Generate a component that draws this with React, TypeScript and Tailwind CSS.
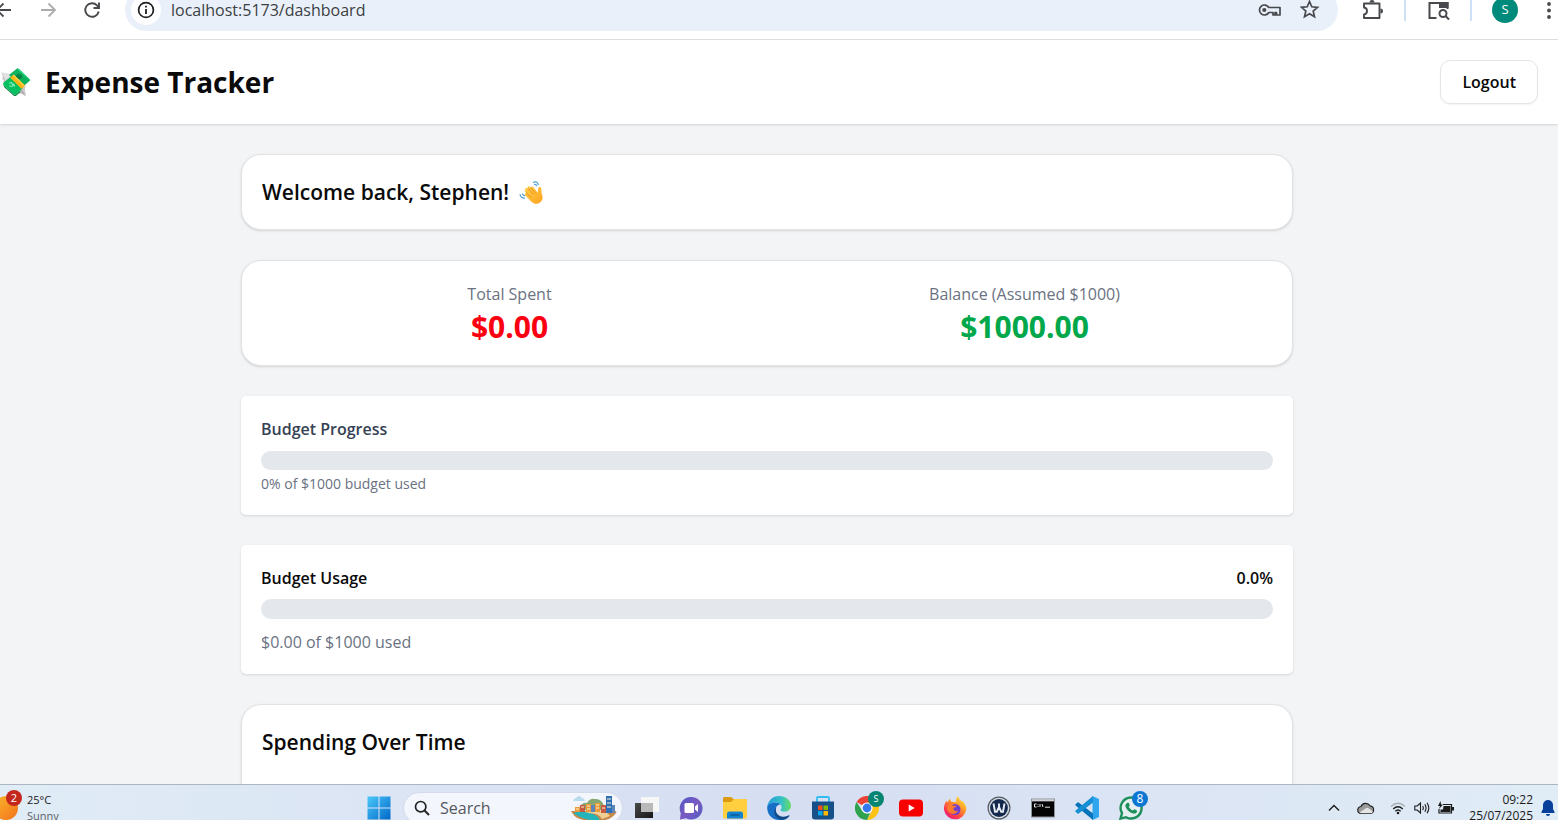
import type { ReactNode } from "react";

const FONT = "font-['Open_Sans','Noto_Sans',sans-serif]";

/* ---------- Illustrations ---------- */

function MoneyWings() {
  return (
    <svg viewBox="0 0 30 30" className="size-[30px] shrink-0" aria-hidden="true">
      <path d="M1.500 5.500l12.500 2.500-6 9-5-2 1-2-2-1 1-2z" fill="#c4c2c6" />
      <path d="M1.500 5.500l11 3-7 4.500z" fill="#e2e1e3" />
      <path d="M17 20l8.500-3-.5 6 1 6.500-4-2.500-6-1z" fill="#cfcacd" />
      <path d="M21 21l4.500 7.500-4-2.500z" fill="#b0aaaf" />
      <path d="M9 8L17 1.500Q18 1 19 2l10.500 10q1 1 0 2l-7.500 6.500z" fill="#0fb25c" />
      <path d="M19 2l10.500 10q.5.500.3 1.200L17.500 2.500z" fill="#35d98c" />
      <ellipse cx="19" cy="9.500" rx="3.200" ry="2.600" fill="#078546" />
      <path d="M11 9.500l12 11.500-6.500 6q-1.500 1-3 0L3.500 18q-1-1.200 0-2.200z" fill="#07c160" />
      <path d="M3.500 18l10 9q1.500 1 3 0l4-3.500v1.500l-4 3.500q-1.500 1-3 0L4 20z" fill="#078a46" />
      <path d="M13.500 7.500l11.500 11-3.200 3.500L10.200 10.800z" fill="#fcb515" />
      <path d="M13.500 7.500l11.500 11-1 1L12.500 8.400z" fill="#ffd147" />
      <path d="M9.500 16.500q2-2 2.500 0t2 .5M9.500 18.500q2 2 3.500 0t1.500 1" stroke="#8cf0bb" fill="none" strokeWidth="1.100" />
    </svg>
  );
}

function WavingHand() {
  return (
    <svg viewBox="0 0 24 24" className="size-6 shrink-0" aria-hidden="true">
      <defs>
        <linearGradient id="hand" x1="0" y1="0" x2="1" y2="1">
          <stop offset="0" stopColor="#ffcf4a" />
          <stop offset="1" stopColor="#fda21f" />
        </linearGradient>
      </defs>
      <path d="M14 2.500q4-2.200 5.500 2.500M15 4.500q2-.8 2.800 1.600" stroke="#4d9fd0" strokeWidth="1.200" fill="none" />
      <path d="M1 14q.5 4.500 5 4M3.500 13.500q.3 2.300 2.500 2.200" stroke="#4d9fd0" strokeWidth="1.200" fill="none" />
      <path
        d="M6.800 8.200c.8-.8 1.700-.5 2.400.2l-.7-1.300c.6-1.300 2-1.200 2.700-.2l.6.800c.3-1.500 1.900-1.700 2.700-.5l4.100 5.600.5-4.300c.2-2 2.900-2.200 3.100-.2.300 2.700.2 5 1.200 7.600 1 3-1 6.500-4.200 7.500-2.500.8-5 .1-6.800-1.700L6.300 15.600c-.9-1-.3-2.300.8-2.500l-.9-1.200c-.8-1-.3-2.500.6-3.700z"
        fill="url(#hand)"
      />
      <path d="M9.200 8.400l5 5.800M7.500 13l4.300 4M11.800 7.600l5 5.800" stroke="#e98a17" strokeWidth=".8" fill="none" strokeLinecap="round" />
    </svg>
  );
}

/* ---------- Browser toolbar ---------- */

function BrowserBar() {
  return (
    <div className="-mt-3 flex h-[52px] shrink-0 items-center border-b border-[#dfe1e3] bg-white pb-2 text-[#47494c]">
      <button aria-label="Back" className="-ml-2 flex w-6 justify-center">
        <svg viewBox="0 0 20 20" className="size-5" fill="none" stroke="currentColor" strokeWidth="1.800">
          <path d="M17 10H3M9.500 3.500L3 10l6.500 6.500" />
        </svg>
      </button>
      <button aria-label="Forward" className="ml-5 flex w-6 justify-center text-[#acacac]">
        <svg viewBox="0 0 20 20" className="size-5" fill="none" stroke="currentColor" strokeWidth="1.800">
          <path d="M3 10h14M10.500 3.500L17 10l-6.500 6.500" />
        </svg>
      </button>
      <button aria-label="Reload" className="ml-5 flex w-6 justify-center">
        <svg viewBox="0 0 20 20" className="size-5" fill="none" stroke="currentColor" strokeWidth="1.900">
          <path d="M16.700 11.500A6.800 6.800 0 1 1 15 5.300l1.500 1.700" />
          <path d="M17 2.500V8h-5.500" />
        </svg>
      </button>
      <div className="ml-[21px] flex h-[42px] flex-1 items-center rounded-full bg-[#e9f0fa] pr-[18px] pl-[6px]">
        <button aria-label="Site information" className="flex size-[30px] items-center justify-center rounded-full bg-white text-[#1f1f1f]">
          <svg viewBox="0 0 18 18" className="size-[18px]" fill="none" stroke="currentColor" strokeWidth="1.700">
            <circle cx="9" cy="9" r="7.400" />
            <path d="M9 8v5M9 4.800v1.800" strokeWidth="1.800" />
          </svg>
        </button>
        <input
          aria-label="Address"
          readOnly
          defaultValue="localhost:5173/dashboard"
          className="ml-[10px] block min-w-0 flex-1 bg-transparent text-[16px] leading-6 text-[#3c4043] outline-none"
        />
        <button aria-label="Passwords" className="flex w-6 justify-center">
          <svg viewBox="0 0 24 16" className="h-4 w-6" fill="none" stroke="currentColor" strokeWidth="1.700">
            <path d="M10.800 5.500A5 5 0 1 0 10.800 10.500H15V13h2v-2.500h1.500V13H22V5.500z" strokeLinejoin="round" />
            <circle cx="6.300" cy="8" r="2.100" fill="currentColor" stroke="none" />
          </svg>
        </button>
        <button aria-label="Bookmark this page" className="ml-[18px] flex w-5 justify-center">
          <svg viewBox="0 0 20 20" className="size-5" fill="none" stroke="currentColor" strokeWidth="1.700">
            <path d="M9.500 1.500l2.300 5.300 5.700.5-4.300 3.800 1.300 5.600-5-3-5 3 1.300-5.600L1.500 7.300l5.700-.5z" />
          </svg>
        </button>
      </div>
      <button aria-label="Extensions" className="ml-6 flex w-[22px] justify-center">
        <svg viewBox="0 0 22 22" className="size-[22px]" fill="none" stroke="currentColor" strokeWidth="1.900" strokeLinejoin="round">
          <path d="M2 4.500H17.500V19H2V15.500C6 15 6 9 2 8.500z" />
          <path d="M7.500 3.500a2.500 2.500 0 0 1 5 0zM18.500 9.500a2.500 2.500 0 0 1 0 5z" fill="currentColor" stroke="none" />
        </svg>
      </button>
      <span className="ml-5 h-[22px] w-[2px] bg-[#cfe1f8]" />
      <button aria-label="Search tabs" className="ml-[22px] flex w-[22px] justify-center">
        <svg viewBox="0 0 22 22" className="size-[22px]" fill="none" stroke="currentColor" strokeWidth="2">
          <path d="M8.500 19H1.500V4h18v6" />
          <path d="M11 3h9.500v6H11z" fill="currentColor" stroke="none" />
          <circle cx="15" cy="14.500" r="3.500" />
          <path d="M17.500 17l3.500 3.500" />
        </svg>
      </button>
      <span className="ml-5 h-[22px] w-[2px] bg-[#cfe1f8]" />
      <button aria-label="Profile" className="ml-5 flex size-[26px] items-center justify-center rounded-full bg-[#008a7b] text-[13px] text-white">
        S
      </button>
      <button aria-label="Menu" className="ml-5 flex w-5 justify-center">
        <svg viewBox="0 0 20 20" className="size-5" fill="currentColor">
          <circle cx="11" cy="4" r="1.900" />
          <circle cx="11" cy="10.500" r="1.900" />
          <circle cx="11" cy="17" r="1.900" />
        </svg>
      </button>
    </div>
  );
}

/* ---------- Dashboard ---------- */

function Card({ children }: { children: ReactNode }) {
  return (
    <section className="rounded-[20px] border border-[#e1e2e4] bg-white p-5 shadow-sm">{children}</section>
  );
}

function Panel({ children }: { children: ReactNode }) {
  return <section className="rounded-[5px] bg-white p-5 shadow-sm">{children}</section>;
}

function Stat({ label, value, tone }: { label: string; value: string; tone: string }) {
  return (
    <div className="text-center">
      <p className="text-[16px] leading-[27px] text-[#6a7282]">{label}</p>
      <p className={`text-[30px] leading-[37px] font-bold ${tone}`}>{value}</p>
    </div>
  );
}

function Dashboard() {
  return (
    <div className="flex min-h-0 flex-1 flex-col bg-[#f3f4f6]">
      <header className="z-10 flex shrink-0 items-center justify-between bg-white py-5 pr-5 shadow">
        <h1 className="flex items-center gap-[15px] text-[28px] leading-9 font-bold text-[#0a0a0a]">
          <MoneyWings />
          Expense Tracker
        </h1>
        <button className="h-11 rounded-[10px] border border-[#e5e5e5] bg-white px-[21px] text-[16px] leading-6 font-semibold text-[#0a0a0a] shadow-xs">
          Logout
        </button>
      </header>
      <main className="min-h-0 flex-1 overflow-hidden pt-[30px] pr-6">
        <div className="mx-auto flex max-w-[1052px] flex-col gap-[30px]">
          <Card>
            <h2 className="flex items-center gap-[10px] text-[21px] leading-[34px] font-semibold text-[#0a0a0a]">
              Welcome back, Stephen! <WavingHand />
            </h2>
          </Card>
          <Card>
            <div className="grid grid-cols-2 gap-5">
              <Stat label="Total Spent" value="$0.00" tone="text-[#fb0010]" />
              <Stat label="Balance (Assumed $1000)" value="$1000.00" tone="text-[#00a84b]" />
            </div>
          </Card>
          <Panel>
            <h3 className="mb-[9px] text-[16px] leading-[26px] font-semibold text-[#364153]">Budget Progress</h3>
            <div role="progressbar" aria-label="Budget progress" aria-valuenow={0} className="h-[19px] rounded-full bg-[#e4e7eb]" />
            <p className="pt-[3px] text-[14px] leading-[22px] text-[#6a7282]">0% of $1000 budget used</p>
          </Panel>
          <Panel>
            <div className="mb-2 flex justify-between text-[16px] leading-[26px] font-semibold text-[#0a0a0a]">
              <h3>Budget Usage</h3>
              <span>0.0%</span>
            </div>
            <div role="progressbar" aria-label="Budget usage" aria-valuenow={0} className="mb-[11px] h-5 rounded-full bg-[#e4e7eb]" />
            <p className="text-[16px] leading-6 text-[#6a7282]">$0.00 of $1000 used</p>
          </Panel>
          <Card>
            <h2 className="mb-40 text-[21px] leading-[34px] font-semibold text-[#0a0a0a]">Spending Over Time</h2>
          </Card>
        </div>
      </main>
    </div>
  );
}

/* ---------- Taskbar ---------- */

function TaskButton({ name, badge, children }: { name: string; badge?: ReactNode; children: ReactNode }) {
  return (
    <button aria-label={name} className="relative flex h-12 w-11 items-center justify-center">
      <svg viewBox="0 0 24 24" className="size-6">{children}</svg>
      {badge}
    </button>
  );
}

function SearchArt() {
  return (
    <svg viewBox="0 0 48 28" className="h-7 w-12 shrink-0" aria-hidden="true">
      <path d="M4 7q1-3 3-3 3-4 6 0 2 0 3 3z" fill="#b8dcec" />
      <path d="M9 16q4-9 9-7 3-5 8-4 8-1 10 11z" fill="#85a872" />
      <path d="M2 17h44q2 0 1 2-5 8-20 8Q8 27 4 20z" fill="#c7884a" />
      <path d="M4 19q12-3 20 1t6 6q-8 1-14-1T4 19z" fill="#24b3b8" />
      <path d="M16 19q14-1 17 6l8-3q-4-6-13-6z" fill="#f0cf95" />
      <path d="M6 13h5v5H6zM17 10h5v8h-5zM26 9h5v9h-5z" fill="#e99a3a" />
      <path d="M11 11h5v7h-5zM32 11h5v8h-5z" fill="#c65a43" />
      <path d="M37 2h6v17h-6z" fill="#2f6fb5" />
      <path d="M22 11h4v7h-4zM43 11h3v8h-3z" fill="#5b86b7" />
      <path d="M7 15h3M12 13h3M18 12h3M18 15h3M27 11h3M27 14h3M33 14h3M38 5h4M38 9h4M38 13h4" stroke="#fff1cc" strokeWidth="1" />
    </svg>
  );
}

function Taskbar() {
  return (
    <footer className="z-20 -mb-[10px] flex h-[46px] shrink-0 items-center overflow-hidden border-t border-[#adb4c2] bg-linear-to-r from-[#e0ecf6] via-[#d6def2] to-[#e0ecf6] text-[#1b1b1b]">
      <button className="relative flex flex-1 basis-0 items-center text-left">
        <span className="-ml-[6px] size-6 shrink-0 rounded-full bg-linear-to-br from-[#f8b62d] to-[#f3701b]" />
        <span className="absolute top-[-2px] left-[6px] flex size-4 items-center justify-center rounded-full bg-[#c4281d] text-[11px] leading-none text-white">
          2
        </span>
        <span className="ml-[9px] flex flex-col text-[11px] leading-4">
          <span>25°C</span>
          <span className="text-[#5b6168]">Sunny</span>
        </span>
      </button>

      <nav aria-label="Taskbar" className="flex items-center pr-12">
        <TaskButton name="Start">
          <defs>
            <linearGradient id="win" x1="0" y1="0" x2="1" y2="1">
              <stop offset="0" stopColor="#4cc9fb" />
              <stop offset="1" stopColor="#0067c8" />
            </linearGradient>
          </defs>
          <path d="M.5.500h11v11H.5zM12.500.500h11v11h-11zM.5 12.500h11v11H.5zM12.500 12.500h11v11h-11z" fill="url(#win)" />
        </TaskButton>
        <div className="mr-0.5 ml-[2px] flex h-8 w-[220px] items-center rounded-full border border-[#d3daea] bg-[#f3f6fc] pr-[5px] pl-[10px]">
          <svg viewBox="0 0 16 16" className="size-4 shrink-0" fill="none" stroke="#222" strokeWidth="1.700">
            <circle cx="6.700" cy="6.700" r="5.200" />
            <path d="M10.500 10.500l4.500 4.500" strokeWidth="2" />
          </svg>
          <input
            aria-label="Search"
            placeholder="Search"
            className="ml-[10px] w-full min-w-0 bg-transparent text-[16px] leading-5 outline-none placeholder:text-[#55585e]"
          />
          <SearchArt />
        </div>
        <TaskButton name="Task view">
          <defs>
            <linearGradient id="tv" x1="0" y1="0" x2="1" y2="1">
              <stop offset="0" stopColor="#494949" />
              <stop offset="1" stopColor="#181818" />
            </linearGradient>
          </defs>
          <path d="M0 7h18v15H0z" fill="url(#tv)" />
          <path d="M6 1h18v15H6z" fill="#f6f6f6" />
          <path d="M6 7h12v9H6z" fill="#b9b9b9" />
        </TaskButton>
        <TaskButton name="Chat">
          <defs>
            <linearGradient id="chat" x1="0" y1="0" x2="1" y2="1">
              <stop offset="0" stopColor="#5059c9" />
              <stop offset=".5" stopColor="#7a59c0" />
              <stop offset="1" stopColor="#5360c8" />
            </linearGradient>
          </defs>
          <path d="M12 1a11.300 11.300 0 1 1-5 21.300L1 23.500l.7-6.500A11.300 11.300 0 0 1 12 1z" fill="url(#chat)" />
          <rect x="5.500" y="7" width="9.500" height="10" rx="1.500" fill="#fff" />
          <path d="M16 10.500l3-2.500v8l-3-2.500z" fill="#fff" />
        </TaskButton>
        <TaskButton name="File Explorer">
          <path d="M0 2.500Q0 1 1.500 1H8l2.500 2H22.500Q24 3 24 4.500V10H0z" fill="#dc9a12" />
          <path d="M0 6h8l3-3h11.500Q24 3 24 4.500V21q0 1.500-1.500 1.500h-21Q0 22.500 0 21z" fill="#ffcf3f" />
          <path d="M4 22.500V18q0-2.500 2.500-2.500h11Q20 15.500 20 18v4.500z" fill="#1382cf" />
          <path d="M8 19h8" stroke="#0c5c9c" strokeWidth="1.500" strokeLinecap="round" />
        </TaskButton>
        <TaskButton name="Edge">
          <defs>
            <linearGradient id="edge" x1="0" y1="0" x2="1" y2="0">
              <stop offset="0" stopColor="#239bdc" />
              <stop offset=".6" stopColor="#35c1c5" />
              <stop offset="1" stopColor="#68dc63" />
            </linearGradient>
          </defs>
          <path d="M.2 11C1 4.500 6 0 12 0c7 0 12 4.700 12 9.600 0 4-3 6-6.400 6-2.600 0-4.200-.8-4-1.700.1-.5 1-1 1-2.800 0-2.700-2.700-4.700-6-4.700C4.500 6.400 1.200 8.500.2 11z" fill="url(#edge)" />
          <path d="M.2 11c1-3 4.300-4.600 8.200-4.600 2.300 0 4.200.8 5.200 2-3 0-5.300 2.500-5.300 5.500 0 5 4.200 8.600 8.700 8.600-1.500 1-3.200 1.500-5 1.500C5 24 0 18.500.2 11z" fill="#176fc5" />
          <path d="M9.300 11c-2 5.500 2.500 10 7.200 9.800 2.300 0 4-.8 5.200-1.500.6-.3 1 .2.700.7-1.500 2.200-4 3.700-6.400 3.900-6-.2-9.500-5-8.600-9.500.3-1.500 1-2.600 1.900-3.400z" fill="#114a8b" />
        </TaskButton>
        <TaskButton name="Microsoft Store">
          <path d="M6 6V2q0-1 1-1h10q1 0 1 1v4" fill="none" stroke="#31bdf2" strokeWidth="1.800" />
          <path d="M1 5.500h22v15q0 3-3 3H4q-3 0-3-3z" fill="#174f88" />
          <path d="M7 9.500h4.500V14H7z" fill="#f25022" />
          <path d="M12.500 9.500H17V14h-4.500z" fill="#7fba00" />
          <path d="M7 15h4.500v4.500H7z" fill="#00a4ef" />
          <path d="M12.500 15H17v4.500h-4.500z" fill="#ffb900" />
        </TaskButton>
        <TaskButton
          name="Chrome"
          badge={
            <span className="absolute top-[7px] right-[5px] flex size-4 items-center justify-center rounded-full bg-[#078573] text-[9px] leading-none text-white">
              S
            </span>
          }
        >
          <path d="M12 12L1.600 6A12 12 0 0 1 22.400 6z" fill="#ea4335" />
          <path d="M12 6.500h10.700A12 12 0 0 1 12 24l4.800-9.200z" fill="#fbc116" />
          <path d="M1.600 6l5.600 8.800 4.800 2.700 3-.5-3 7A12 12 0 0 1 1.600 6z" fill="#2fa24f" />
          <circle cx="12" cy="12" r="5.600" fill="#fff" />
          <circle cx="12" cy="12" r="4.400" fill="#3579f0" />
        </TaskButton>
        <TaskButton name="YouTube">
          <rect x="0" y="3.500" width="24" height="17" rx="4" fill="#f80000" />
          <path d="M9.700 8.500v7l6-3.500z" fill="#fff" />
        </TaskButton>
        <TaskButton name="Firefox">
          <defs>
            <linearGradient id="fox" x1=".9" y1="0" x2=".2" y2="1">
              <stop offset="0" stopColor="#fff14a" />
              <stop offset=".4" stopColor="#ff9a26" />
              <stop offset=".75" stopColor="#ff3c4c" />
              <stop offset="1" stopColor="#e31587" />
            </linearGradient>
          </defs>
          <path d="M15 0c.5 2.500 2 3.700 3.500 5.200L19.500 5c3 3 4 6 3.800 8.500A11.300 11.300 0 0 1 1 14C.6 10 2 7 3.500 4.500c.2 1 .3 1.500.7 2L7 2.500c.2 1.600.8 2.600 1.700 3.200L13 6c-.3-2 .4-4.500 2-6z" fill="url(#fox)" />
          <circle cx="12" cy="13.500" r="5.500" fill="#6f3fd0" />
          <path d="M4.500 9.500c2-1.700 4-1 5 0l4 .3c-.5 1.600-2 1.800-3 2.200-.5 2.500 2 3.700 4.500 2.500-1 3.500-5 4.500-8 2.500s-3.500-5-2.500-7.500z" fill="#ff7a2e" />
        </TaskButton>
        <TaskButton name="WPS">
          <circle cx="12" cy="12" r="11.500" fill="#555b66" />
          <circle cx="12" cy="12" r="10.300" fill="#d9dde4" />
          <circle cx="12" cy="12" r="8.900" fill="#14294d" />
          <path d="M6.500 7.500l1.500 8.200h1.800L12 11l2.200 4.700H16l1.500-8.200M12 7.500v4" stroke="#e8edf5" strokeWidth="1.900" fill="none" />
        </TaskButton>
        <TaskButton name="Command Prompt">
          <path d="M0 2.500h24v19H0z" fill="#8f9499" />
          <path d="M1 5.500h22v15H1z" fill="#050505" />
          <path d="M1 3.300h22v1.700H1z" fill="#cfd3d6" />
          <path d="M5.500 8H3.500v3h2M7 8.300v.9M7 10v1M9 8v3M11 8l1 3M14 11.200h5" stroke="#e8e8e8" strokeWidth="1" fill="none" />
        </TaskButton>
        <TaskButton name="Visual Studio Code">
          <path d="M17.500 0L24 3v18l-6.500 3z" fill="#2ea5ec" />
          <path d="M.6 8.200L2.500 6.500q.6-.4 1.200 0L18 17.500V24L.6 9.400q-.7-.6 0-1.200z" fill="#0873b9" />
          <path d="M.6 15.800l1.900 1.700q.6.400 1.200 0L18 6.500V0L.6 14.600q-.7.600 0 1.200z" fill="#168fd5" />
        </TaskButton>
        <TaskButton
          name="WhatsApp"
          badge={
            <span className="absolute top-[7px] right-[5px] flex size-4 items-center justify-center rounded-full bg-[#0c76d3] text-[12px] leading-none text-white">
              8
            </span>
          }
        >
          <path d="M12 1.500a10.500 10.500 0 1 1-5 19.700L1.500 22.600 3 17.200A10.500 10.500 0 0 1 12 1.500z" fill="#e5eef0" stroke="#1d8f5a" strokeWidth="2.400" />
          <path d="M8.600 6.800c.5-.3 1-.2 1.200.3l.9 2c.1.500-.1.800-1 1.700 1 1.900 2.400 3 4.200 3.800.8-.9 1.200-1.500 1.700-1.300l2.200 1.100c.4.200.4.600.2 1.300-.5 1.500-2.300 2.200-3.800 1.800-4-1-6.700-3.700-7.800-7-.4-1.500.9-3.100 2.200-3.700z" fill="#1d8f5a" />
        </TaskButton>
      </nav>

      <div className="flex flex-1 basis-0 items-center justify-end">
        <button aria-label="Show hidden icons" className="flex w-4 justify-center">
          <svg viewBox="0 0 12 12" className="size-3" fill="none" stroke="currentColor" strokeWidth="1.400">
            <path d="M1 8.500l5-5 5 5" />
          </svg>
        </button>
        <button aria-label="OneDrive" className="ml-4 flex w-4 justify-center">
          <svg viewBox="0 0 18 14" className="h-[14px] w-[18px] shrink-0" fill="#9a9a9a" stroke="#222" strokeWidth="1.200">
            <path d="M4.500 12.500a3.500 3.500 0 0 1-.5-7 5 5 0 0 1 9-.7 3.900 3.900 0 0 1 .5 7.700z" />
            <path d="M4.500 12.300q-1.500 0-2-.7l6-4.200q1.500-1 3-.2l4.500 3.500q-1 1.600-2.500 1.600z" fill="#e5e5e5" stroke="none" />
          </svg>
        </button>
        <button aria-label="Network" className="ml-4 flex w-4 justify-center">
          <svg viewBox="0 0 16 14" className="h-[14px] w-4" fill="none" stroke="currentColor" strokeWidth="1.300">
            <path d="M1 5.500q7-6.500 14 0" stroke="#a5adb5" />
            <path d="M3.200 8q4.800-4.500 9.600 0M5.300 10.300q2.700-2.600 5.400 0" />
            <circle cx="8" cy="12" r="1.300" fill="currentColor" stroke="none" />
          </svg>
        </button>
        <button aria-label="Volume" className="ml-2 flex w-4 justify-center">
          <svg viewBox="0 0 16 14" className="h-[14px] w-4" fill="none" stroke="currentColor" strokeWidth="1.100">
            <path d="M.8 5h2.400L6.500 2v10L3.200 9H.8zM8.700 5q1.300 2 0 4M10.800 3.300q2.500 3.700 0 7.400M13 1.700q3.700 5.300 0 10.600" />
          </svg>
        </button>
        <button aria-label="Battery" className="ml-2 flex w-4 justify-center">
          <svg viewBox="0 0 16 14" className="h-[14px] w-4" fill="none" stroke="currentColor" strokeWidth="1.200">
            <path d="M5 3.500h8.500v8.500H1V8" />
            <path d="M5.500 5h7v6h-10V8.500H5zM14 6h2v3.500h-2zM2.500 0L0 5h2l-1 3 4-4.500H3z" fill="currentColor" stroke="none" />
          </svg>
        </button>
        <button className="ml-[15px] flex flex-col text-right text-[12px] leading-4">
          <span>09:22</span>
          <span>25/07/2025</span>
        </button>
        <button aria-label="Notifications" className="mr-[3px] ml-2 flex w-[14px] justify-center text-[#073f9b]">
          <svg viewBox="0 0 14 16" className="h-4 w-[14px]" fill="currentColor">
            <path d="M7 0a5 5 0 0 1 5 5v4l1.600 3q.3 1-.8 1H1.200q-1.100 0-.8-1L2 9V5a5 5 0 0 1 5-5zM5 14h4a2 2 0 0 1-4 0z" />
          </svg>
        </button>
      </div>
    </footer>
  );
}

export default function App() {
  return (
    <div className={`flex h-screen flex-col overflow-hidden bg-white ${FONT}`}>
      <BrowserBar />
      <Dashboard />
      <Taskbar />
    </div>
  );
}
